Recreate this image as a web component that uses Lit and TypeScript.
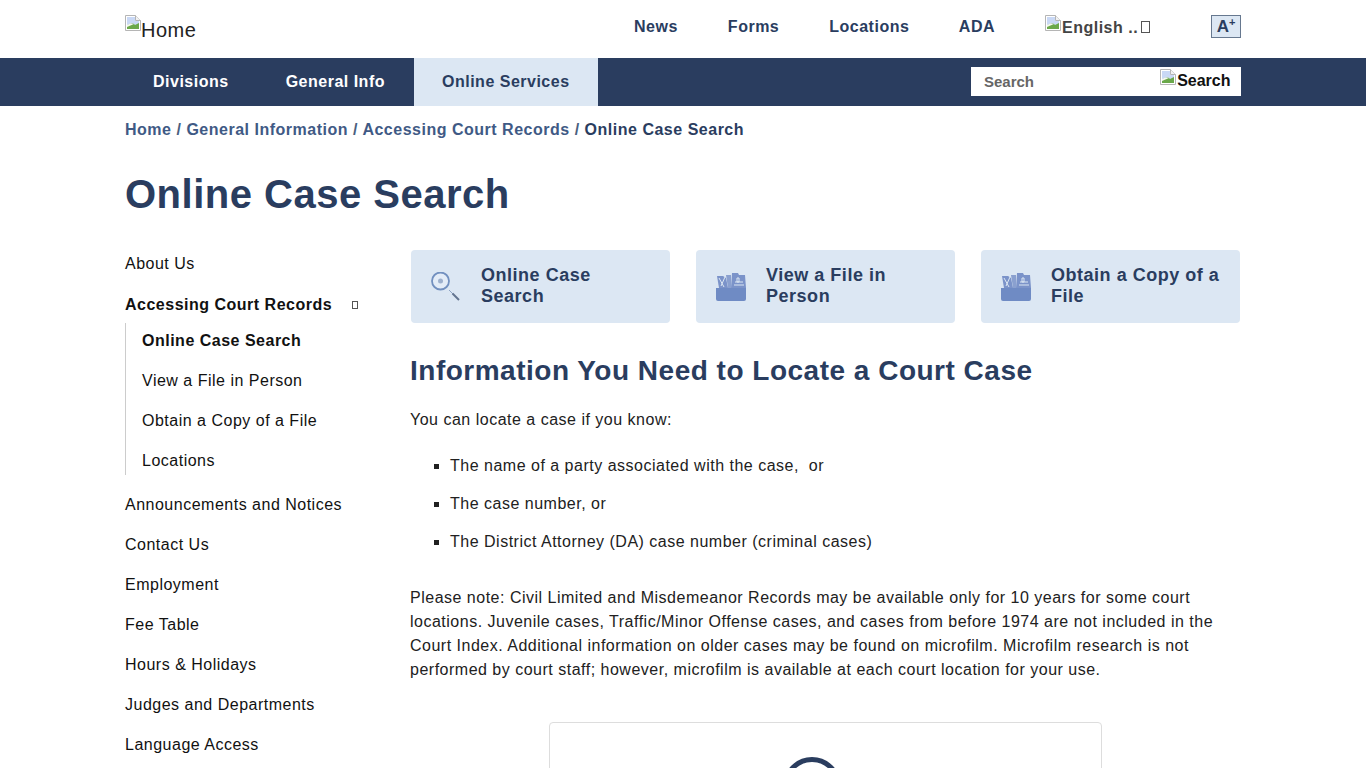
import { LitElement, html, css, svg } from 'lit';
import { customElement } from 'lit/decorators.js';

const brokenImage = html`<svg class="broken" width="16" height="16" viewBox="0 0 16 16">
  <path d="M.5.5h10l5 5v10H.5z" fill="#fff" stroke="#b5b5b5"/>
  <path d="M10.500.5v5h5" fill="#f2f2f2" stroke="#b5b5b5"/>
  <path d="M2 2h8v4h4v4L2 11z" fill="#c9d8f5"/>
  <path d="M2 11c3-3 6-3 8-1l4-2v6H2z" fill="#6aa84a"/>
  <path d="M2 10c2-1.500 5-2 7-1l-7 3z" fill="#f4f7ee"/>
</svg>`;

const magnifier = svg`
  <circle cx="9.500" cy="9" r="8.500" fill="#e3ecf7" stroke="#7290bf" stroke-width="1.800"/>
  <circle cx="9.500" cy="9" r="2.500" fill="#9db0cd"/>
  <path d="M18 18l4 4" stroke="#8ea3c4" stroke-width="1"/>
  <path d="M21.500 21.500l6.500 6.500" stroke="#63748f" stroke-width="2"/>`;

const fileBox = svg`
  <path d="M1 4h6l3 2 2 10H3z" fill="#7b93c9"/>
  <path d="M10 3h5v13h-3z" fill="#8aa0cf"/>
  <path d="M16 1h6l1 2h6l1 13H15z" fill="#7b93c9"/>
  <path d="M3 6l5 9M9 5l-4 9" stroke="#dce7f3" stroke-width="1"/>
  <path d="M19 10h8M18 13h10M21 6h2v4h-2z" stroke="#dce7f3" stroke-width="1" fill="none"/>
  <path d="M0 16h30v11a2 2 0 0 1-2 2H2a2 2 0 0 1-2-2z" fill="#6f8bc4"/>`;

const subLinks = ['View a File in Person', 'Obtain a Copy of a File', 'Locations'];
const sideLinks = [
  'Announcements and Notices',
  'Contact Us',
  'Employment',
  'Fee Table',
  'Hours & Holidays',
  'Judges and Departments',
  'Language Access',
];

const cards = [
  { icon: magnifier, label: 'Online Case Search' },
  { icon: fileBox, label: 'View a File in Person' },
  { icon: fileBox, label: 'Obtain a Copy of a File' },
];

@customElement('app-root')
export class AppRoot extends LitElement {
  static styles = css`
    :host {
      display: block;
      height: 768px;
      overflow: hidden;
      background: #fff;
      color: #212121;
      font-family: 'Liberation Sans', Arial, sans-serif;
      font-size: 16px;
      letter-spacing: 0.5px;
    }

    .wrap {
      width: 1116px;
      margin: 0 auto;
    }

    .broken {
      flex: none;
    }

    .top {
      height: 58px;
    }

    .top .wrap {
      display: flex;
      align-items: flex-start;
      justify-content: space-between;
    }

    .logo {
      display: flex;
      padding-top: 15px;
      font-size: 20px;
      line-height: 31px;
      color: #222;
    }

    .util {
      display: flex;
      align-items: flex-start;
      padding-top: 15px;
      font-weight: 700;
      line-height: 23px;
      color: #2a3d5f;
    }

    .util a {
      margin-right: 50px;
    }

    .util a:nth-child(3) {
      margin-right: 49.500px;
    }

    .lang {
      display: flex;
      width: 106px;
      margin-right: 60px;
      color: #444;
      font-size: 16px;
      letter-spacing: 0.5px;
      white-space: nowrap;
    }

    .lang span {
      margin: 1px 0 0 1px;
    }

    .box {
      display: inline-block;
      width: 9px;
      height: 12px;
      margin: 6px 0 0 3px;
      border: 1px solid #555;
      box-sizing: border-box;
    }

    .aplus {
      box-sizing: border-box;
      width: 30px;
      height: 23px;
      border: 1px solid #66788f;
      background: #dce7f3;
      text-align: center;
      font-size: 17px;
      line-height: 21px;
      letter-spacing: 0;
    }

    .aplus sup {
      font-size: 11px;
      line-height: 0;
      vertical-align: 6px;
    }

    .nav {
      height: 48px;
      background: #2a3d5f;
    }

    .nav .wrap {
      display: flex;
      justify-content: space-between;
    }

    .tabs {
      display: flex;
    }

    .tabs a {
      padding: 0 29px 0 28px;
      color: #fff;
      font-weight: 700;
      line-height: 48px;
    }

    .tabs a.on {
      padding: 0 28px;
      background: #dce7f3;
      color: #2a3d5f;
    }

    .search {
      display: flex;
      justify-content: space-between;
      box-sizing: border-box;
      width: 270px;
      height: 29px;
      margin-top: 9px;
      padding: 2px 10.500px 0 13px;
      background: #fff;
      font-weight: 700;
    }

    .search .hint {
      padding-top: 4px;
      color: #666;
      font-size: 15px;
      letter-spacing: 0;
    }

    .search .go {
      display: flex;
      margin-top: 2px;
      color: #111;
      font-size: 16px;
      line-height: 20px;
      letter-spacing: 0;
    }

    .search .go .broken {
      margin: -2px 1px 0 0;
    }

    .crumbs {
      padding-top: 15px;
      line-height: 18px;
      font-weight: 700;
      color: #4a5f80;
      letter-spacing: 0.51px;
    }

    .crumbs a {
      color: #3f5a85;
    }

    .crumbs b {
      color: #2a3d5f;
    }

    h1 {
      margin: 32px 0 33px;
      color: #2a3d5f;
      font-size: 40px;
      line-height: 46px;
      letter-spacing: 0.5px;
    }

    .cols {
      display: flex;
    }

    .side {
      flex: none;
      width: 285px;
      padding-top: 1px;
      color: #111;
    }

    .side a {
      display: block;
      height: 40px;
      line-height: 26px;
    }

    .side > a:first-child {
      height: 41px;
    }

    .side .head {
      display: flex;
      align-items: center;
      justify-content: space-between;
      width: 233px;
      height: 26px;
      margin-bottom: 5px;
      line-height: 26px;
      font-weight: 700;
    }

    .side .head i {
      box-sizing: border-box;
      width: 6px;
      height: 8px;
      border: 1px solid #555;
    }

    .sub {
      height: 151px;
      margin: 0 0 17px;
      padding: 1px 0 0 16px;
      border-left: 1px solid #ccc;
    }

    .sub a {
      height: 40px;
      line-height: 34px;
    }

    .sub a.on {
      font-weight: 700;
    }

    .main {
      flex: 1;
      min-width: 0;
    }

    .cards {
      display: flex;
      gap: 26px;
      padding-left: 1px;
    }

    .card {
      display: flex;
      align-items: center;
      gap: 20px;
      box-sizing: border-box;
      width: 259px;
      height: 73px;
      padding: 0 14px 0 20px;
      border-radius: 4px;
      background: #dce7f3;
      color: #2a3d5f;
      font-size: 18px;
      font-weight: 700;
      line-height: 21px;
      letter-spacing: 0.52px;
    }

    .card svg {
      flex: none;
    }

    .card span {
      margin-bottom: 2px;
    }

    h2 {
      margin: 32px 0 21px;
      color: #2a3d5f;
      font-size: 28px;
      line-height: 32px;
      letter-spacing: 0.5px;
    }

    p {
      margin: 0;
      line-height: 24px;
    }

    ul {
      margin: 22px 0 0;
      padding: 0 0 0 40px;
      list-style: square;
    }

    li {
      height: 38px;
      line-height: 24px;
    }

    .note {
      margin-top: 18px;
      width: 830px;
    }

    .panel {
      box-sizing: border-box;
      width: 553px;
      height: 120px;
      margin: 40px 0 0 139px;
      padding: 34px 0 0 233px;
      border: 1px solid #ddd;
      border-radius: 4px;
    }

    .ring {
      display: block;
    }
  `;

  render() {
    return html`
      <div class="top">
        <div class="wrap">
          <div class="logo">${brokenImage}<span>Home</span></div>
          <div class="util">
            <a>News</a>
            <a>Forms</a>
            <a>Locations</a>
            <a>ADA</a>
            <div class="lang">${brokenImage}<span>English ..</span><i class="box"></i></div>
            <div class="aplus">A<sup>+</sup></div>
          </div>
        </div>
      </div>
      <div class="nav">
        <div class="wrap">
          <div class="tabs">
            <a>Divisions</a>
            <a>General Info</a>
            <a class="on">Online Services</a>
          </div>
          <div class="search">
            <span class="hint">Search</span>
            <span class="go">${brokenImage}Search</span>
          </div>
        </div>
      </div>
      <div class="wrap">
        <div class="crumbs">
          <a>Home</a> / <a>General Information</a> / <a>Accessing Court Records</a> /
          <b>Online Case Search</b>
        </div>
        <h1>Online Case Search</h1>
        <div class="cols">
          <nav class="side">
            <a>About Us</a>
            <div class="head">Accessing Court Records<i></i></div>
            <div class="sub">
              <a class="on">Online Case Search</a>
              ${subLinks.map((l) => html`<a>${l}</a>`)}
            </div>
            ${sideLinks.map((l) => html`<a>${l}</a>`)}
          </nav>
          <div class="main">
            <div class="cards">
              ${cards.map(
                (c) => html`<div class="card">
                  <svg width="30" height="30" viewBox="0 0 30 30">${c.icon}</svg>
                  <span>${c.label}</span>
                </div>`
              )}
            </div>
            <h2>Information You Need to Locate a Court Case</h2>
            <p>You can locate a case if you know:</p>
            <ul>
              <li>The name of a party associated with the case,&nbsp; or</li>
              <li>The case number, or</li>
              <li>The District Attorney (DA) case number (criminal cases)</li>
            </ul>
            <p class="note">
              Please note: Civil Limited and Misdemeanor Records may be available only for 10 years
              for some court locations. Juvenile cases, Traffic/Minor Offense cases, and cases from
              before 1974 are not included in the Court Index. Additional information on older cases
              may be found on microfilm. Microfilm research is not performed by court staff; however,
              microfilm is available at each court location for your use.
            </p>
            <div class="panel">
              <svg class="ring" width="58" height="58" viewBox="0 0 58 58">
                <circle cx="29" cy="29" r="26.500" fill="none" stroke="#2a3d5f" stroke-width="5"/>
              </svg>
            </div>
          </div>
        </div>
      </div>
    `;
  }
}
